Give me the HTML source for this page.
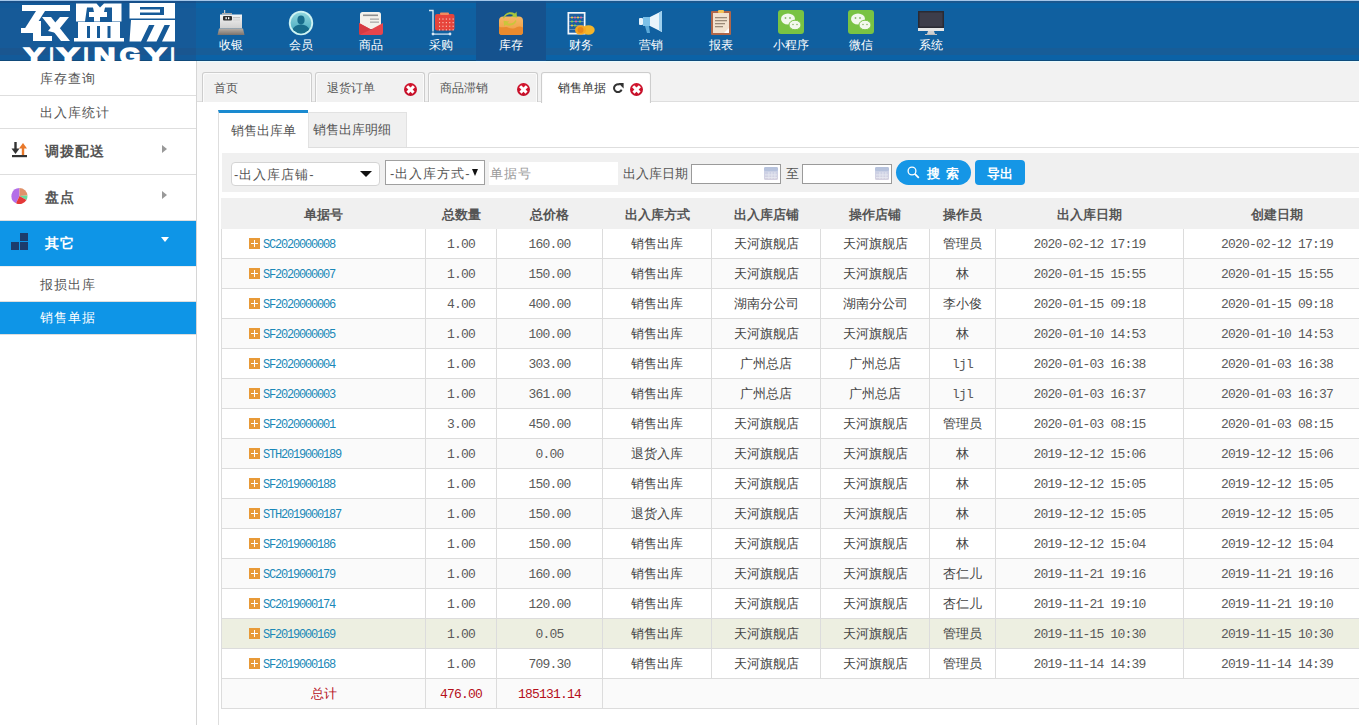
<!DOCTYPE html>
<html><head><meta charset="utf-8"><title>销售单据</title>
<style>
*{margin:0;padding:0;box-sizing:border-box}
html,body{width:1359px;height:725px;overflow:hidden;background:#fff;font-family:"Liberation Sans",sans-serif;font-size:12px;color:#555}
.abs{position:absolute}
#hdr{position:absolute;left:0;top:0;width:1359px;height:61px;border-top:1px solid #a3c6e9;background:linear-gradient(#195890 0,#195890 2px,#0a63a6 2px,#0a63a6 7px,#1060a0 7px,#1060a0 47px,#175d98 47px,#175d98 54px,#0b62a6 54px,#0b62a6 59px,#0f4c7c 59px)}
#logo{position:absolute;left:0;top:0;width:196px;height:61px;border-top:1px solid #a3c6e9;background:linear-gradient(#17508a 0,#17508a 2px,#125a9a 2px,#125a9a 7px,#165a98 7px,#165a98 47px,#1a5690 47px,#1a5690 54px,#135a99 54px,#135a99 59px,#114a7a 59px);overflow:hidden}
#logo .cn{position:absolute;left:21px;top:-5px;font-size:40px;line-height:50px;font-weight:bold;color:#fff;letter-spacing:14px;white-space:nowrap}
#logo .en{position:absolute;left:22px;top:42px;font-size:20px;line-height:22px;font-weight:bold;color:#fff;letter-spacing:3px;white-space:nowrap}
.ni{position:absolute;top:1px;width:70px;height:60px;text-align:center;color:#fff}
.ni.on{background:#15528e}
.ni svg{position:absolute;left:21px;top:8px;width:28px;height:27px}
.ni span{position:absolute;left:0;width:70px;top:36px;font-size:12px;line-height:16px;color:#fff}
#side{position:absolute;left:0;top:61px;width:197px;height:664px;border-right:1px solid #d6d6d6;background:#fff}
.si{position:absolute;left:0;width:196px;font-size:13px;letter-spacing:1px;color:#555;border-bottom:1px solid #dedede}
.si span{position:absolute;left:40px}
.sg{position:absolute;left:0;width:196px;font-size:14px;letter-spacing:1px;font-weight:bold;color:#555;border-bottom:1px solid #dedede}
.sg span{position:absolute;left:45px}
.sg svg{position:absolute;left:11px}
.sg .ar{position:absolute;left:162px;width:0;height:0;border-left:5px solid #999;border-top:4px solid transparent;border-bottom:4px solid transparent}
.blue{background:#0e95e7;color:#fff;border-bottom-color:#0e95e7}
#tabbar{position:absolute;left:197px;top:61px;width:1162px;height:41px;border-top:1px solid #e8fbff;background:#f2f2f2;border-bottom:1px solid #dedede}
.tab{position:absolute;top:72px;height:30px;width:110px;border:1px solid #cdcdcd;border-bottom:none;border-radius:3px 3px 0 0;background:#f1f1f1;box-shadow:inset 1px 1px 0 #fbfbfb,inset -1px 0 0 #fbfbfb;font-size:12px;color:#555}
.tab.on{background:#fff;color:#333;height:31px}
.tab span{position:absolute;left:11px;top:7px;line-height:16px}
.xx{position:absolute;top:10px;width:13px;height:13px;border-radius:50%;background:radial-gradient(circle at 50% 40%,#e0192f 0,#c8102a 60%,#b00a20 100%)}
.xx:before,.xx:after{content:"";position:absolute;left:2px;top:5.25px;width:9px;height:2.5px;background:#fff;transform:rotate(45deg)}
.xx:after{transform:rotate(-45deg)}
#itabs{position:absolute;left:218px;top:110px}
.it{position:absolute;font-size:13px;color:#555}
#sbar{position:absolute;left:222px;top:153px;width:1137px;height:39px;background:#f0f0f0}
.sel{position:absolute;background:#fff;font-size:13px;letter-spacing:1px;color:#555}
.sel span{position:absolute;left:2px;top:4px;line-height:16px}
.tri{position:absolute;width:0;height:0;border-top:6px solid #111;border-left:6px solid transparent;border-right:6px solid transparent}
.btn{position:absolute;top:160px;height:25px;background:#1596e6;color:#fff;font-size:13px;font-weight:bold}
.cal{position:absolute;top:2px;right:2px;width:14px;height:13px}
#grid{position:absolute;left:221px;top:198px}
table{border-collapse:collapse;table-layout:fixed;font-size:13px}
td{height:30px;border:1px solid #dcdcdc;text-align:center;color:#444;white-space:nowrap;overflow:hidden;padding:0}
tr.th td{background:#f0f0f0;font-weight:bold;color:#555;border-color:#f0f0f0;height:30px;padding-top:2px}
tr.ev td{background:#fafafa}
tr.hl td{background:#edefe1}
tr.tot td{background:#fafafa;color:#b5101a}
td.n{font-family:"Liberation Mono",monospace;font-size:13px;letter-spacing:-0.8px;color:#5a5a5a;padding-top:1px}
td.c0{text-align:left;padding-left:27px}
td.c0 a{font-family:"Liberation Mono",monospace;font-size:12px;letter-spacing:-1.2px;color:#1a88b8;vertical-align:middle}
i.pl{display:inline-block;width:11px;height:11px;background:#e89a38;vertical-align:middle;margin-right:3px;position:relative;top:-1px}
i.pl:before{content:"";position:absolute;left:2px;top:5px;width:7px;height:1px;background:#fff}
i.pl:after{content:"";position:absolute;left:5px;top:2px;width:1px;height:7px;background:#fff}

</style></head><body>
<div id="hdr"></div>
<div id="logo"><svg width="196" height="61" viewBox="0 0 196 61" style="position:absolute;left:0;top:-1px">
<g fill="#fff">
<rect x="22" y="5" width="48" height="6"/>
<polygon points="36,11 45,11 31,33 22,33"/><rect x="21" y="28" width="13" height="5"/>
<rect x="33" y="21" width="8" height="20"/>
<rect x="33" y="36" width="19" height="5"/>
<polygon points="42,17 51,17 70,41 61,41"/>
<polygon points="60,17 69,17 56,33 48,31"/>
<path d="M76 3.5h45.5v18H76z M87 7.5L93 7.5L94 12L89 12L89 17L94 17L94 21.5L85 21.5z M96.5 3.5L104 3.5L100 7.5z M105 7.5L112 7.5L112 21.5L100 21.5L100 17L107 17L107 12L104 12z" fill-rule="evenodd"/>
<path d="M78 22h42v16H78z M87 26h3v12h-3z M97 26h3v12h-3z M107.5 26h3v12h-3z" fill-rule="evenodd"/>
<rect x="74" y="38" width="50" height="3.5"/>
<path d="M129.5 3h45.5v15.5h-45.5z M140 7h24v8h-24z" fill-rule="evenodd"/>
<rect x="140" y="9.5" width="20" height="3"/>
<path d="M131 20h44v21.5h-45.5l1.5-21.5z M149 25h5.5l-8 16.5h-5.5z M164.5 25h5.5l-8 16.5h-5.5z" fill-rule="evenodd"/>
</g>
<g font-family="Liberation Sans" font-weight="bold" font-size="22" fill="#fff" stroke="#fff" stroke-width="1.5"><text x="23.7" y="62.5" textLength="20.6" lengthAdjust="spacingAndGlyphs">Y</text><text x="49.7" y="62.5" textLength="3.6" lengthAdjust="spacingAndGlyphs">I</text><text x="56.7" y="62.5" textLength="22.6" lengthAdjust="spacingAndGlyphs">Y</text><text x="83.7" y="62.5" textLength="4.6" lengthAdjust="spacingAndGlyphs">I</text><text x="93.7" y="62.5" textLength="21.6" lengthAdjust="spacingAndGlyphs">N</text><text x="119.7" y="62.5" textLength="20.6" lengthAdjust="spacingAndGlyphs">G</text><text x="144.7" y="62.5" textLength="21.6" lengthAdjust="spacingAndGlyphs">Y</text><text x="170.7" y="62.5" textLength="3.6" lengthAdjust="spacingAndGlyphs">I</text></g>
</svg></div>
<!-- nav -->
<div class="ni" style="left:196px"><svg viewBox="0 0 28 27"><defs><linearGradient id="g1" x1="0" y1="0" x2="0" y2="1"><stop offset="0" stop-color="#f4f4f4"/><stop offset="1" stop-color="#cfcfcf"/></linearGradient><linearGradient id="g2" x1="0" y1="0" x2="0" y2="1"><stop offset="0" stop-color="#b8b0a8"/><stop offset="1" stop-color="#7a726c"/></linearGradient></defs>
<rect x="7" y="1" width="1.2" height="4" fill="#ccc"/><rect x="5" y="4" width="10" height="1.5" fill="#aaa"/>
<path d="M3 5.5h22v14H3z" fill="url(#g1)"/><rect x="6" y="7" width="9" height="4.5" rx="1" fill="#2e2e2e"/><rect x="8.5" y="8.2" width="1.3" height="2" fill="#fff"/><rect x="11" y="8.2" width="1.3" height="2" fill="#fff"/>
<rect x="16" y="8" width="7" height="1.2" fill="#c4c4c4"/><rect x="16" y="10.5" width="7" height="1" fill="#d0d0d0"/><path d="M2 19.5h24l1.5 6.5H0.5z" fill="url(#g2)"/></svg><span>收银</span></div>
<div class="ni" style="left:266px"><svg viewBox="0 0 28 27"><defs><linearGradient id="g3" x1="0" y1="0" x2="0" y2="1"><stop offset="0" stop-color="#8fd6dc"/><stop offset="1" stop-color="#3fa6bd"/></linearGradient></defs><circle cx="14" cy="14" r="12.2" fill="#cdf3f3"/><circle cx="14" cy="14" r="10.4" fill="url(#g3)"/><clipPath id="cp1"><circle cx="14" cy="14" r="10.4"/></clipPath><g clip-path="url(#cp1)" fill="#176d8c"><ellipse cx="14" cy="11" rx="3.6" ry="4.4"/><path d="M4 26c0-6 4-10.5 10-10.5s10 4.5 10 10.5z"/></g></svg><span>会员</span></div>
<div class="ni" style="left:336px"><svg viewBox="0 0 28 27"><rect x="3" y="3" width="21" height="17" rx="2.5" fill="#f3f1ec"/><rect x="6" y="5.5" width="15" height="1.6" fill="#8e8e8e"/><rect x="13" y="9.5" width="9" height="1.3" fill="#a8a8a8"/><rect x="13" y="12.5" width="9" height="1.3" fill="#a8a8a8"/><path d="M2 14l12 6.5 12-6.5v9.5a2.5 2.5 0 0 1-2.5 2.5h-19a2.5 2.5 0 0 1-2.5-2.5z" fill="#e6454c"/><path d="M2 14l12 6.5-11.5 5.2c-.3-.5-.5-1.2-.5-2.2z" fill="#d63a42"/></svg><span>商品</span></div>
<div class="ni" style="left:406px"><svg viewBox="0 0 28 27"><path d="M2 1.5h4v21" stroke="#d5e8f3" stroke-width="1.4" fill="none"/><rect x="8" y="5" width="19.5" height="16.5" rx="2" fill="#e7443b"/><rect x="13" y="3.5" width="9" height="2.5" rx="1" fill="#f28a5e"/><g fill="#fbd3c8"><rect x="12.0" y="9.5" width="1.1" height="1.1"/><rect x="12.0" y="13.1" width="1.1" height="1.1"/><rect x="12.0" y="16.7" width="1.1" height="1.1"/><rect x="12.0" y="20.3" width="1.1" height="1.1"/><rect x="15.4" y="9.5" width="1.1" height="1.1"/><rect x="15.4" y="13.1" width="1.1" height="1.1"/><rect x="15.4" y="16.7" width="1.1" height="1.1"/><rect x="15.4" y="20.3" width="1.1" height="1.1"/><rect x="18.8" y="9.5" width="1.1" height="1.1"/><rect x="18.8" y="13.1" width="1.1" height="1.1"/><rect x="18.8" y="16.7" width="1.1" height="1.1"/><rect x="18.8" y="20.3" width="1.1" height="1.1"/><rect x="22.2" y="9.5" width="1.1" height="1.1"/><rect x="22.2" y="13.1" width="1.1" height="1.1"/><rect x="22.2" y="16.7" width="1.1" height="1.1"/><rect x="22.2" y="20.3" width="1.1" height="1.1"/><rect x="25.6" y="9.5" width="1.1" height="1.1"/><rect x="25.6" y="13.1" width="1.1" height="1.1"/><rect x="25.6" y="16.7" width="1.1" height="1.1"/><rect x="25.6" y="20.3" width="1.1" height="1.1"/></g><rect x="6" y="24.5" width="17" height="1.2" fill="#dbe9f5"/><circle cx="6" cy="25" r="1.4" fill="#dbe9f5"/><circle cx="23" cy="25" r="1.4" fill="#dbe9f5"/></svg><span>采购</span></div>
<div class="ni on" style="left:476px"><svg viewBox="0 0 28 27"><defs><linearGradient id="g4" x1="0" y1="0" x2="0" y2="1"><stop offset="0" stop-color="#f5b866"/><stop offset="1" stop-color="#ee9a3e"/></linearGradient></defs><path d="M2 11.5c0-2.5 1.8-4 4-4h16c2.2 0 4 1.5 4 4v11.5c0 2-1.3 3-3 3H5c-1.7 0-3-1-3-3z" fill="url(#g4)"/><path d="M2 17.5c3 2 6-.5 9 1s6 1.5 9-.5c2-1 4-.5 6 .5v4.5c0 2-1.3 3-3 3H5c-1.7 0-3-1-3-3z" fill="#e98a2e"/><path d="M6 9c1.5-5 7-7.5 12-4.5l1.5-2 .5 6-6-.8 2.2-1.6c-3.5-1.8-7.5-.5-9.2 3.5z" fill="#a8c53c"/><path d="M19.5 12c-1.5 4-6.5 6-11 3.8l-1.2 1.8-.8-5.8 5.8.6-2 1.6c3 1.3 6.6.3 8.2-3z" fill="#c9c63a"/></svg><span>库存</span></div>
<div class="ni" style="left:546px"><svg viewBox="0 0 28 27"><rect x="0.5" y="3" width="18" height="22.5" fill="#f4f8fc"/><rect x="2.2" y="4.7" width="14.6" height="19" fill="#1d5f9e"/><g stroke="#9fb6cc" stroke-width="0.6"><path d="M2.2 8.5h14.6M2.2 12.5h14.6M2.2 16.5h14.6M2.2 20.5h14.6"/></g><g><circle cx="5" cy="8.5" r="1.1" fill="#f2c14a"/><circle cx="8" cy="8.5" r="1.1" fill="#e86aa0"/><circle cx="11" cy="8.5" r="1.1" fill="#f2c14a"/><circle cx="14" cy="8.5" r="1.1" fill="#e86aa0"/><circle cx="5" cy="12.5" r="1.1" fill="#8dd04a"/><circle cx="9" cy="12.5" r="1.1" fill="#e86aa0"/><circle cx="13" cy="12.5" r="1.1" fill="#8dd04a"/><circle cx="5" cy="16.5" r="1.1" fill="#f2c14a"/><circle cx="8" cy="16.5" r="1.1" fill="#8dd04a"/></g><ellipse cx="21.5" cy="21" rx="6.2" ry="4.8" fill="#f4b52a"/><ellipse cx="13.5" cy="21" rx="5.5" ry="4.8" fill="#f5a623"/><circle cx="13.5" cy="21" r="3" fill="#e8861a"/></svg><span>财务</span></div>
<div class="ni" style="left:616px"><svg viewBox="0 0 28 27"><path d="M13 8l12-6v21l-12-6z" fill="#eaf4fb"/><path d="M22 3.5l3-1.5v21l-3-1.5z" fill="#9fd0ee"/><rect x="6" y="8" width="7" height="9" fill="#7cc0e8"/><rect x="2" y="9" width="4" height="7" rx="1" fill="#e8f3fa"/><path d="M8 17h4l1 7h-3z" fill="#5ba9d9"/></svg><span>营销</span></div>
<div class="ni" style="left:686px"><svg viewBox="0 0 28 27"><rect x="4" y="2" width="20" height="24" rx="1" fill="#b0674a"/><rect x="6" y="4" width="16" height="20" fill="#f2e2cf"/><rect x="11" y="1" width="6" height="3" rx="1" fill="#f2c455"/><g fill="#9b8a78"><rect x="8" y="8" width="12" height="1.3"/><rect x="8" y="11" width="12" height="1.3"/><rect x="8" y="14" width="10" height="1.3"/><rect x="8" y="17" width="8" height="1.3"/></g><path d="M17 24l5-5v5z" fill="#fff"/></svg><span>报表</span></div>
<div class="ni" style="left:756px"><svg viewBox="0 0 28 27"><rect x="1" y="1" width="26" height="24" rx="3" fill="#79c343"/><ellipse cx="11" cy="10" rx="7" ry="5.5" fill="#f3f8ee"/><ellipse cx="18" cy="16" rx="6" ry="4.8" fill="#f3f8ee" stroke="#79c343" stroke-width="1"/><g fill="#8ab86a"><circle cx="8.5" cy="9" r="0.9"/><circle cx="13" cy="9" r="0.9"/><circle cx="16" cy="15.5" r="0.8"/><circle cx="20" cy="15.5" r="0.8"/></g></svg><span>小程序</span></div>
<div class="ni" style="left:826px"><svg viewBox="0 0 28 27"><rect x="1" y="1" width="26" height="24" rx="3" fill="#79c343"/><ellipse cx="11" cy="10" rx="7" ry="5.5" fill="#f3f8ee"/><ellipse cx="18" cy="16" rx="6" ry="4.8" fill="#f3f8ee" stroke="#79c343" stroke-width="1"/><g fill="#8ab86a"><circle cx="8.5" cy="9" r="0.9"/><circle cx="13" cy="9" r="0.9"/><circle cx="16" cy="15.5" r="0.8"/><circle cx="20" cy="15.5" r="0.8"/></g></svg><span>微信</span></div>
<div class="ni" style="left:896px"><svg viewBox="0 0 28 27"><rect x="1" y="2" width="26" height="17" fill="#2a2a33"/><rect x="2.5" y="3.5" width="23" height="14" fill="#3d3d4a"/><rect x="1" y="19" width="26" height="3" fill="#e6e6e6"/><path d="M11 22h6l1 3h-8z" fill="#cfcfcf"/><rect x="8" y="25" width="12" height="1" fill="#bdbdbd"/></svg><span>系统</span></div>
<!-- sidebar -->
<div id="side"></div>
<div class="si" style="top:61px;height:35px"><span style="top:9px">库存查询</span></div>
<div class="si" style="top:96px;height:33px"><span style="top:8px">出入库统计</span></div>
<div class="sg" style="top:129px;height:46px"><svg style="top:13px" width="17" height="16" viewBox="0 0 17 16"><path d="M4.5 0v8" stroke="#333" stroke-width="2.4"/><path d="M0.5 6.5h8l-4 5.5z" fill="#333"/><path d="M12 13V5" stroke="#e8782a" stroke-width="2.4"/><path d="M8 6.5h8l-4-5.5z" fill="#e8782a"/><rect x="1" y="13" width="15" height="2.2" fill="#333"/></svg><span style="top:14px">调拨配送</span><i class="ar" style="top:16px"></i></div>
<div class="sg" style="top:175px;height:46px"><svg style="top:12px" width="17" height="18" viewBox="0 0 17 18"><path d="M8.5 9V1A8 8 0 0 0 5 16.2z" fill="#b36ee8"/><path d="M8.5 9V1A8 8 0 0 1 16.5 8.5z" fill="#e0926a"/><path d="M8.5 9l8-0.5A8 8 0 0 1 15.5 13z" fill="#66dd99"/><path d="M8.5 9l7 4A8 8 0 0 1 5 16.2z" fill="#e43838"/></svg><span style="top:14px">盘点</span><i class="ar" style="top:16px"></i></div>
<div class="sg blue" style="top:221px;height:45px"><svg style="top:12px" width="17" height="17" viewBox="0 0 17 17"><rect x="9" y="0" width="8" height="8" fill="#1c3c6c"/><rect x="0" y="9" width="8" height="8" fill="#1c3c6c"/><rect x="9" y="9" width="8" height="8" fill="#1c3c6c"/></svg><span style="top:14px;color:#fff">其它</span><i style="position:absolute;left:161px;top:16px;width:0;height:0;border-top:5px solid #fff;border-left:4px solid transparent;border-right:4px solid transparent"></i></div>
<div class="si" style="top:266px;height:36px;border-top:1px solid #eee"><span style="top:9px">报损出库</span></div>
<div class="si blue" style="top:302px;height:33px;border-bottom:1px solid #ddd"><span style="top:7px;color:#fff">销售单据</span></div>
<!-- tabs -->
<div id="tabbar"></div>
<div class="tab" style="left:202px"><span>首页</span></div>
<div class="tab" style="left:315px"><span>退货订单</span><i class="xx" style="left:88px"></i></div>
<div class="tab" style="left:428px"><span>商品滞销</span><i class="xx" style="left:88px"></i></div>
<div class="tab on" style="left:541px"><span style="left:16px">销售单据</span><svg style="position:absolute;left:71px;top:10px" width="11" height="10" viewBox="0 0 11 10"><path d="M8.6 6.6A3.9 3.9 0 1 1 6.8 1.7" stroke="#333" stroke-width="2" fill="none"/><path d="M5.2 0L10.6 0L10.6 5.4z" fill="#333"/></svg><i class="xx" style="left:88px"></i></div>
<!-- content -->
<div class="abs" style="left:218px;top:147px;width:1px;height:578px;background:#dedede"></div>
<div class="abs" style="left:218px;top:147px;width:1141px;height:1px;background:#dedede"></div>
<div class="it" style="left:218px;top:110px;width:90px;height:38px;background:#fff;border-top:3px solid #1a8ad0;border-left:1px solid #dedede"><span class="abs" style="left:12px;top:9px">销售出库单</span></div>
<div class="it" style="left:308px;top:112px;width:99px;height:35px;background:#f0f0f0;border:1px solid #e2e2e2;border-bottom:none"><span class="abs" style="left:4px;top:8px">销售出库明细</span></div>
<div id="sbar"></div>
<div class="sel" style="left:231px;top:162px;width:149px;height:24px;border:1px solid #d4d4d4;border-radius:4px"><span>-出入库店铺-</span><i class="tri" style="left:128px;top:8px"></i></div>
<div class="sel" style="left:385px;top:160px;width:100px;height:25px;border:1px solid #a0a0a0"><span style="left:4px;top:5px">-出入库方式-</span><i class="tri" style="left:86px;top:8px;border-top-width:7px;border-left-width:3px;border-right-width:3px"></i></div>
<div class="sel" style="left:489px;top:162px;width:129px;height:23px"><span style="color:#999;left:1px;top:4px">单据号</span></div>
<div class="abs" style="left:623px;top:166px;font-size:13px;line-height:16px;color:#555">出入库日期</div>
<div class="sel" style="left:691px;top:164px;width:90px;height:20px;border:1px solid #9a9a9a"><svg class="cal" viewBox="0 0 14 13"><defs><linearGradient id="cg" x1="0" y1="0" x2="0" y2="1"><stop offset="0" stop-color="#c6d0e8"/><stop offset="1" stop-color="#d6d2e0"/></linearGradient></defs><rect x="0" y="0" width="14" height="13" rx="1.5" fill="url(#cg)"/><rect x="0" y="0" width="14" height="4" rx="1.5" fill="#b6c2dc"/><g fill="#eef0f6" opacity="0.8"><rect x="4.5" y="5" width="0.8" height="7"/><rect x="7.5" y="5" width="0.8" height="7"/><rect x="10.5" y="5" width="0.8" height="7"/><rect x="1" y="7.5" width="12" height="0.8"/><rect x="1" y="10" width="12" height="0.8"/></g></svg></div>
<div class="abs" style="left:786px;top:166px;font-size:13px;line-height:16px;color:#555">至</div>
<div class="sel" style="left:802px;top:164px;width:90px;height:20px;border:1px solid #9a9a9a"><svg class="cal" viewBox="0 0 14 13"><defs><linearGradient id="cg" x1="0" y1="0" x2="0" y2="1"><stop offset="0" stop-color="#c6d0e8"/><stop offset="1" stop-color="#d6d2e0"/></linearGradient></defs><rect x="0" y="0" width="14" height="13" rx="1.5" fill="url(#cg)"/><rect x="0" y="0" width="14" height="4" rx="1.5" fill="#b6c2dc"/><g fill="#eef0f6" opacity="0.8"><rect x="4.5" y="5" width="0.8" height="7"/><rect x="7.5" y="5" width="0.8" height="7"/><rect x="10.5" y="5" width="0.8" height="7"/><rect x="1" y="7.5" width="12" height="0.8"/><rect x="1" y="10" width="12" height="0.8"/></g></svg></div>
<div class="btn" style="left:896px;width:75px;border-radius:12.5px"><svg class="abs" style="left:11px;top:6px" width="13" height="13" viewBox="0 0 13 13"><circle cx="5" cy="5" r="3.9" stroke="#fff" stroke-width="1.3" fill="none"/><path d="M7.8 7.8l4 4" stroke="#fff" stroke-width="1.8"/></svg><span class="abs" style="left:31px;top:6px;line-height:16px;letter-spacing:6px">搜索</span></div>
<div class="btn" style="left:975px;width:50px;border-radius:4px"><span class="abs" style="left:12px;top:6px;line-height:16px">导出</span></div>
<div id="grid"><table style="width:1149px"><colgroup><col style="width:204px"><col style="width:71px"><col style="width:106px"><col style="width:109px"><col style="width:109px"><col style="width:109px"><col style="width:66px"><col style="width:188px"><col style="width:187px"></colgroup><tr class="th"><td>单据号</td><td>总数量</td><td>总价格</td><td>出入库方式</td><td>出入库店铺</td><td>操作店铺</td><td>操作员</td><td>出入库日期</td><td>创建日期</td></tr><tr class="od"><td class="c0"><i class="pl"></i><a>SC2020000008</a></td><td class="n">1.00</td><td class="n">160.00</td><td>销售出库</td><td>天河旗舰店</td><td>天河旗舰店</td><td>管理员</td><td class="n">2020-02-12 17:19</td><td class="n">2020-02-12 17:19</td></tr><tr class="ev"><td class="c0"><i class="pl"></i><a>SF2020000007</a></td><td class="n">1.00</td><td class="n">150.00</td><td>销售出库</td><td>天河旗舰店</td><td>天河旗舰店</td><td>林</td><td class="n">2020-01-15 15:55</td><td class="n">2020-01-15 15:55</td></tr><tr class="od"><td class="c0"><i class="pl"></i><a>SF2020000006</a></td><td class="n">4.00</td><td class="n">400.00</td><td>销售出库</td><td>湖南分公司</td><td>湖南分公司</td><td>李小俊</td><td class="n">2020-01-15 09:18</td><td class="n">2020-01-15 09:18</td></tr><tr class="ev"><td class="c0"><i class="pl"></i><a>SF2020000005</a></td><td class="n">1.00</td><td class="n">100.00</td><td>销售出库</td><td>天河旗舰店</td><td>天河旗舰店</td><td>林</td><td class="n">2020-01-10 14:53</td><td class="n">2020-01-10 14:53</td></tr><tr class="od"><td class="c0"><i class="pl"></i><a>SF2020000004</a></td><td class="n">1.00</td><td class="n">303.00</td><td>销售出库</td><td>广州总店</td><td>广州总店</td><td class="n">ljl</td><td class="n">2020-01-03 16:38</td><td class="n">2020-01-03 16:38</td></tr><tr class="ev"><td class="c0"><i class="pl"></i><a>SF2020000003</a></td><td class="n">1.00</td><td class="n">361.00</td><td>销售出库</td><td>广州总店</td><td>广州总店</td><td class="n">ljl</td><td class="n">2020-01-03 16:37</td><td class="n">2020-01-03 16:37</td></tr><tr class="od"><td class="c0"><i class="pl"></i><a>SF2020000001</a></td><td class="n">3.00</td><td class="n">450.00</td><td>销售出库</td><td>天河旗舰店</td><td>天河旗舰店</td><td>管理员</td><td class="n">2020-01-03 08:15</td><td class="n">2020-01-03 08:15</td></tr><tr class="ev"><td class="c0"><i class="pl"></i><a>STH2019000189</a></td><td class="n">1.00</td><td class="n">0.00</td><td>退货入库</td><td>天河旗舰店</td><td>天河旗舰店</td><td>林</td><td class="n">2019-12-12 15:06</td><td class="n">2019-12-12 15:06</td></tr><tr class="od"><td class="c0"><i class="pl"></i><a>SF2019000188</a></td><td class="n">1.00</td><td class="n">150.00</td><td>销售出库</td><td>天河旗舰店</td><td>天河旗舰店</td><td>林</td><td class="n">2019-12-12 15:05</td><td class="n">2019-12-12 15:05</td></tr><tr class="ev"><td class="c0"><i class="pl"></i><a>STH2019000187</a></td><td class="n">1.00</td><td class="n">150.00</td><td>退货入库</td><td>天河旗舰店</td><td>天河旗舰店</td><td>林</td><td class="n">2019-12-12 15:05</td><td class="n">2019-12-12 15:05</td></tr><tr class="od"><td class="c0"><i class="pl"></i><a>SF2019000186</a></td><td class="n">1.00</td><td class="n">150.00</td><td>销售出库</td><td>天河旗舰店</td><td>天河旗舰店</td><td>林</td><td class="n">2019-12-12 15:04</td><td class="n">2019-12-12 15:04</td></tr><tr class="ev"><td class="c0"><i class="pl"></i><a>SC2019000179</a></td><td class="n">1.00</td><td class="n">160.00</td><td>销售出库</td><td>天河旗舰店</td><td>天河旗舰店</td><td>杏仁儿</td><td class="n">2019-11-21 19:16</td><td class="n">2019-11-21 19:16</td></tr><tr class="od"><td class="c0"><i class="pl"></i><a>SC2019000174</a></td><td class="n">1.00</td><td class="n">120.00</td><td>销售出库</td><td>天河旗舰店</td><td>天河旗舰店</td><td>杏仁儿</td><td class="n">2019-11-21 19:10</td><td class="n">2019-11-21 19:10</td></tr><tr class="hl"><td class="c0"><i class="pl"></i><a>SF2019000169</a></td><td class="n">1.00</td><td class="n">0.05</td><td>销售出库</td><td>天河旗舰店</td><td>天河旗舰店</td><td>管理员</td><td class="n">2019-11-15 10:30</td><td class="n">2019-11-15 10:30</td></tr><tr class="od"><td class="c0"><i class="pl"></i><a>SF2019000168</a></td><td class="n">1.00</td><td class="n">709.30</td><td>销售出库</td><td>天河旗舰店</td><td>天河旗舰店</td><td>管理员</td><td class="n">2019-11-14 14:39</td><td class="n">2019-11-14 14:39</td></tr><tr class="tot"><td>总计</td><td class="n">476.00</td><td class="n">185131.14</td><td colspan="6"></td></tr></table></div>
</body></html>
